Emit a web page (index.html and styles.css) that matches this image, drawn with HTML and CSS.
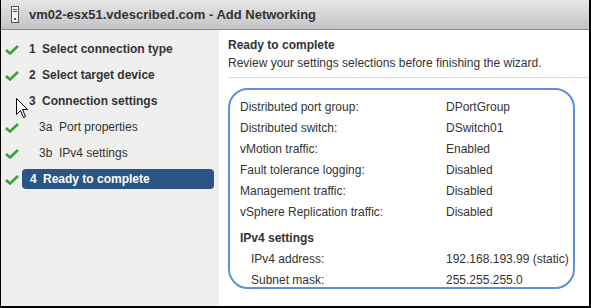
FILE: index.html
```html
<!DOCTYPE html>
<html lang="en">
<head>
    <meta charset="UTF-8">
    <title>Add Networking</title>
    <link rel="stylesheet" href="styles.css">
</head>
<body>
    <div class="window">
        <div class="titlebar">
            <svg class="host-icon" width="8" height="17" viewBox="0 0 8 17">
                <rect x="0.5" y="0.5" width="7" height="16" fill="#f4f4f4" stroke="#555"/>
                <line x1="2" y1="3.5" x2="6" y2="3.5" stroke="#555"/>
                <line x1="2" y1="5.5" x2="6" y2="5.5" stroke="#555"/>
                <rect x="3" y="12" width="2" height="2" fill="#555"/>
            </svg>
            <span class="title">vm02-esx51.vdescribed.com - Add Networking</span>
        </div>
        <div class="content">
            <ul class="steps">
                <li class="step done"><span class="num">1</span>Select connection type</li>
                <li class="step done"><span class="num">2</span>Select target device</li>
                <li class="step"><span class="num">3</span>Connection settings</li>
                <li class="step sub done"><span class="num">3a</span>Port properties</li>
                <li class="step sub done"><span class="num">3b</span>IPv4 settings</li>
                <li class="step done current"><span class="label"><span class="num">4</span>Ready to complete</span></li>
            </ul>
            <div class="page">
                <h1>Ready to complete</h1>
                <p class="intro">Review your settings selections before finishing the wizard.</p>
                <div class="summary">
                    <div class="row"><span class="key">Distributed port group:</span><span>DPortGroup</span></div>
                    <div class="row"><span class="key">Distributed switch:</span><span>DSwitch01</span></div>
                    <div class="row"><span class="key">vMotion traffic:</span><span>Enabled</span></div>
                    <div class="row"><span class="key">Fault tolerance logging:</span><span>Disabled</span></div>
                    <div class="row"><span class="key">Management traffic:</span><span>Disabled</span></div>
                    <div class="row"><span class="key">vSphere Replication traffic:</span><span>Disabled</span></div>
                    <h2>IPv4 settings</h2>
                    <div class="row indent"><span class="key">IPv4 address:</span><span>192.168.193.99 (static)</span></div>
                    <div class="row indent"><span class="key">Subnet mask:</span><span>255.255.255.0</span></div>
                </div>
            </div>
        </div>
        <!-- mouse pointer over the step list -->
        <svg class="cursor" width="13" height="21" viewBox="0 0 13 21">
            <path d="M0.5 0.5 L0.5 16.5 L4.5 12.5 L7.5 19.5 L9.5 18.5 L6.5 11.5 L11.5 11.5 Z" fill="#fff" stroke="#000" stroke-linejoin="miter"/>
        </svg>
    </div>
</body>
</html>
```

FILE: styles.css
```css
html, body {
    margin: 0;
    padding: 0;
}
body {
    font-family: "Liberation Sans", Arial, sans-serif;
    font-size: 12px;
    color: #333;
}
.window {
    position: relative;
    width: 588px;
    height: 306px;
    border-left: 1px solid #000;
    border-right: 2px solid #000;
    border-bottom: 2px solid #000;
    display: flex;
    flex-direction: column;
    overflow: hidden;
}
.titlebar {
    height: 29px;
    border-bottom: 1px solid #8a8a8a;
    background: linear-gradient(#e6e6e6, #c4c4c8);
    display: flex;
    align-items: center;
    padding-left: 10px;
}
.host-icon {
    margin-right: 10px;
}
.title {
    font-weight: bold;
    font-size: 13px;
    color: #333;
}
.content {
    flex: 1;
    display: flex;
}
.steps {
    list-style: none;
    margin: 0;
    padding: 6px 0 0 0;
    width: 218px;
    background: #efefef;
}
.step {
    height: 26px;
    display: flex;
    align-items: center;
    padding-left: 28px;
    font-weight: bold;
    position: relative;
}
.step .num {
    display: inline-block;
    width: 13px;
}
.step.sub {
    font-weight: normal;
    padding-left: 38px;
}
.step.sub .num {
    width: 20px;
}
.step.done::before {
    content: "";
    position: absolute;
    left: 4px;
    top: 9px;
    width: 14px;
    height: 10px;
    background: url("data:image/svg+xml,%3Csvg xmlns='http://www.w3.org/2000/svg' width='14' height='10' viewBox='0 0 14 10'%3E%3Cpath d='M1 5 L5 8.5 L13 1' fill='none' stroke='%2339a33a' stroke-width='2.6'/%3E%3C/svg%3E") no-repeat;
}
.step.current {
    padding-left: 21px;
}
.step.current .label {
    flex: 1;
    margin-right: 5px;
    height: 20px;
    line-height: 20px;
    padding-left: 8px;
    background: #2b5584;
    color: #fff;
    border-radius: 4px;
}
.page {
    flex: 1;
    padding-left: 9px;
}
h1 {
    font-size: 12px;
    font-weight: bold;
    margin: 8px 0 0 0;
    line-height: 15px;
}
.intro {
    margin: 3px 0 0 0;
    line-height: 15px;
    padding-bottom: 6px;
    border-bottom: 1px solid #dadada;
}
.summary {
    margin-top: 10px;
    width: 323px;
    height: 190px;
    border: 2px solid #5f8fd8;
    border-radius: 20px;
    padding: 7px 10px 0 10px;
}
.row {
    display: flex;
    height: 21px;
    line-height: 21px;
    white-space: nowrap;
}
.row .key {
    flex-shrink: 0;
    width: 206px;
}
.row.indent {
    padding-left: 11px;
}
.row.indent .key {
    width: 195px;
}
h2 {
    font-size: 12px;
    font-weight: bold;
    margin: 5px 0 0 0;
    line-height: 21px;
}
.cursor {
    position: absolute;
    left: 15px;
    top: 98px;
}
```
